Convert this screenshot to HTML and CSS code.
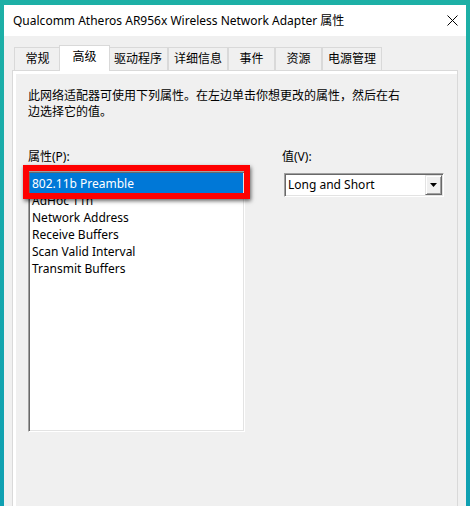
FILE: index.html
```html
<!DOCTYPE html>
<html lang="zh-CN">
<head>
<meta charset="utf-8">
<title>属性</title>
<link rel="stylesheet" href="styles.css">
</head>
<body>
<div class="window">
  <div class="titlebar">
    <span class="title">Qualcomm Atheros AR956x Wireless Network Adapter 属性</span>
    <svg class="close" width="11" height="11" viewBox="0 0 11 11"><path d="M0.5 0.5L10.5 10.5M10.5 0.5L0.5 10.5" stroke="#000" stroke-width="1" fill="none"/></svg>
  </div>
  <div class="client">
    <div class="tabs">
      <div class="tab">常规</div>
      <div class="tab sel">高级</div>
      <div class="tab">驱动程序</div>
      <div class="tab">详细信息</div>
      <div class="tab">事件</div>
      <div class="tab">资源</div>
      <div class="tab">电源管理</div>
    </div>
    <div class="panel">
      <p class="desc">此网络适配器可使用下列属性。在左边单击你想更改的属性，然后在右边选择它的值。</p>
      <div class="fields">
        <div class="col-left">
          <div class="label">属性(P):</div>
          <div class="listwrap">
            <ul class="list">
              <li class="row sel">802.11b Preamble</li>
              <li class="row">AdHoc 11n</li>
              <li class="row">Network Address</li>
              <li class="row">Receive Buffers</li>
              <li class="row">Scan Valid Interval</li>
              <li class="row">Transmit Buffers</li>
            </ul>
            <div class="callout"></div>
          </div>
        </div>
        <div class="col-right">
          <div class="label">值(V):</div>
          <div class="combo">
            <span class="combo-text">Long and Short</span>
            <span class="combo-btn"><svg width="7" height="4" viewBox="0 0 7 4"><path d="M0 0H7L3.5 4Z" fill="#000"/></svg></span>
          </div>
        </div>
      </div>
    </div>
  </div>
</div>
</body>
</html>
```
FILE: styles.css
```css
html, body {
  margin: 0;
  padding: 0;
}
body {
  height: 506px;
  overflow: hidden;
  background: linear-gradient(to bottom, #1db0a6, #0fa0b2);
  font-family: "Noto Sans", "Noto Sans CJK SC", sans-serif;
  font-size: 12px;
  color: #000;
}
.window {
  margin: 5px 4px 0 4px;
  height: 501px;
  background: #f0f0f0;
  overflow: hidden;
}
.titlebar {
  height: 31px;
  background: #fff;
  display: flex;
  align-items: center;
  justify-content: space-between;
  padding: 0 8px 0 9px;
}
.title {
  font-size: 12px;
  line-height: 16px;
  white-space: nowrap;
}
.close {
  display: block;
}
.client {
  padding: 9px 8px 0 8px;
}
.tabs {
  display: flex;
  align-items: flex-end;
  height: 25px;
  margin-left: 2px;
}
.tab {
  box-sizing: border-box;
  height: 23px;
  min-width: 47px;
  padding: 0 5px;
  border: 1px solid #d9d9d9;
  border-bottom: none;
  background: #f0f0f0;
  display: flex;
  align-items: center;
  justify-content: center;
  line-height: 16px;
  white-space: nowrap;
}
.tab.sel {
  height: 26px;
  min-width: 51px;
  margin: 0 -2px -1px -2px;
  padding-bottom: 3px;
  background: #fff;
  position: relative;
  z-index: 1;
}
.panel {
  height: 460px;
  border: 1px solid #d9d9d9;
  box-shadow: inset 3px 3px 0 #fff;
  background: #f0f0f0;
  padding: 17px 15px 0 15px;
}
.desc {
  margin: 0;
  width: 380px;
  line-height: 16px;
}
.fields {
  display: flex;
  margin-top: 29px;
}
.col-left {
  width: 217px;
}
.col-right {
  margin-left: 37px;
}
.label {
  height: 16px;
  line-height: 16px;
}
.listwrap {
  position: relative;
  margin-top: 6px;
  width: 217px;
  height: 261px;
}
.list {
  box-sizing: border-box;
  margin: 0;
  list-style: none;
  width: 217px;
  height: 261px;
  padding: 3px 1px 0 1px;
  background: #fff;
  border: 1px solid;
  border-color: #a0a0a0 #fff #fff #a0a0a0;
  box-shadow: inset 1px 1px 0 #696969, inset -1px -1px 0 #e3e3e3;
}
.row {
  height: 17px;
  line-height: 17px;
  padding-left: 2px;
  white-space: nowrap;
}
.row.sel {
  background: #0078d7;
  color: #fff;
  box-shadow: 0 -2px 0 #0078d7, 0 1px 0 #0078d7;
}
.callout {
  position: absolute;
  left: -5px;
  top: -6px;
  width: 227px;
  height: 34px;
  box-sizing: border-box;
  border: 6px solid #f00;
  box-shadow: 1px 2px 4px rgba(0, 0, 0, 0.6);
}
.combo {
  box-sizing: border-box;
  margin: 8px 0 0 2px;
  width: 160px;
  height: 24px;
  display: flex;
  padding: 1px 1px 1px 3px;
  background: #fff;
  border: 1px solid;
  border-color: #a0a0a0 #fff #fff #a0a0a0;
  box-shadow: inset 1px 1px 0 #696969, inset -1px -1px 0 #e3e3e3;
}
.combo-text {
  flex: 1;
  line-height: 20px;
  white-space: nowrap;
}
.combo-btn {
  box-sizing: border-box;
  width: 17px;
  height: 20px;
  background: #f0f0f0;
  border: 1px solid;
  border-color: #e3e3e3 #696969 #696969 #e3e3e3;
  box-shadow: inset 1px 1px 0 #fff, inset -1px -1px 0 #a0a0a0;
  display: flex;
  align-items: center;
  justify-content: center;
}
.combo-btn svg {
  display: block;
}
```
